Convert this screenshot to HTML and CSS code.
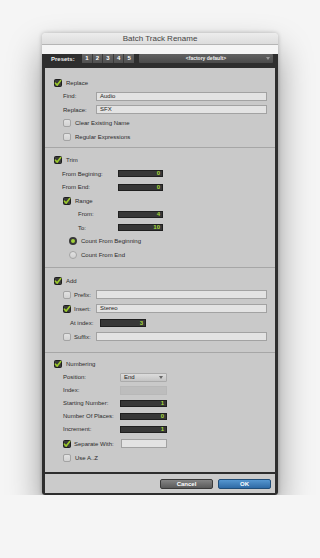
FILE: index.html
```html
<!DOCTYPE html>
<html>
<head>
<meta charset="utf-8">
<link rel="stylesheet" href="styles.css">
</head>
<body>
<div class="win">
  <div class="title">Batch Track Rename</div>
  <div class="frame">
    <div class="presets">
      <span class="plabel">Presets:</span>
      <div class="pbtns"><span>1</span><span>2</span><span>3</span><span>4</span><span>5</span></div>
      <div class="pdrop">&lt;factory default&gt;<i class="tri"></i></div>
    </div>
    <div class="panel">
      <section class="sec s-replace">
        <div class="row p9"><span class="cb on"><svg viewBox="0 0 8 8"><path d="M1.4 4.2 L3.2 6.1 L6.7 1.6"/></svg></span><span class="t">Replace</span></div>
        <div class="row p18"><span class="lbl w33">Find:</span><span class="inp w171">Audio</span></div>
        <div class="row p18"><span class="lbl w33">Replace:</span><span class="inp w171">SFX</span></div>
        <div class="row p18"><span class="cb"></span><span class="t">Clear Existing Name</span></div>
        <div class="row p18"><span class="cb"></span><span class="t">Regular Expressions</span></div>
      </section>
      <section class="sec s-trim">
        <div class="row p9"><span class="cb on"><svg viewBox="0 0 8 8"><path d="M1.4 4.2 L3.2 6.1 L6.7 1.6"/></svg></span><span class="t">Trim</span></div>
        <div class="row p17"><span class="lbl w56">From Begining:</span><span class="num w45">0</span></div>
        <div class="row p17"><span class="lbl w56">From End:</span><span class="num w45">0</span></div>
        <div class="row p18"><span class="cb on"><svg viewBox="0 0 8 8"><path d="M1.4 4.2 L3.2 6.1 L6.7 1.6"/></svg></span><span class="t">Range</span></div>
        <div class="row p33"><span class="lbl w40">From:</span><span class="num w45">4</span></div>
        <div class="row p33"><span class="lbl w40">To:</span><span class="num w45">10</span></div>
        <div class="row p24"><span class="rd on"></span><span class="t t4">Count From Beginning</span></div>
        <div class="row p24"><span class="rd"></span><span class="t t4">Count From End</span></div>
      </section>
      <section class="sec s-add">
        <div class="row p9 h13"><span class="cb on"><svg viewBox="0 0 8 8"><path d="M1.4 4.2 L3.2 6.1 L6.7 1.6"/></svg></span><span class="t">Add</span></div>
        <div class="row p18 h14"><span class="cb"></span><span class="lbl w22 t">Prefix:</span><span class="inp w171"></span></div>
        <div class="row p18 h14"><span class="cb on"><svg viewBox="0 0 8 8"><path d="M1.4 4.2 L3.2 6.1 L6.7 1.6"/></svg></span><span class="lbl w22 t">Insert:</span><span class="inp w171">Stereo</span></div>
        <div class="row p25 h14"><span class="lbl w30">At index:</span><span class="num w46 tall">3</span></div>
        <div class="row p18 h14"><span class="cb"></span><span class="lbl w22 t">Suffix:</span><span class="inp w171"></span></div>
      </section>
      <section class="sec s-num">
        <div class="row p9 h13"><span class="cb on"><svg viewBox="0 0 8 8"><path d="M1.4 4.2 L3.2 6.1 L6.7 1.6"/></svg></span><span class="t">Numbering</span></div>
        <div class="row p18 h13"><span class="lbl w57">Position:</span><span class="sel w47">End<i class="tri dk"></i></span></div>
        <div class="row p18 h13"><span class="lbl w57">Index:</span><span class="dis w47"></span></div>
        <div class="row p18 h13"><span class="lbl w57">Starting Number:</span><span class="num w47">1</span></div>
        <div class="row p18 h13"><span class="lbl w57">Number Of Places:</span><span class="num w47">0</span></div>
        <div class="row p18 h13"><span class="lbl w57">Increment:</span><span class="num w47">1</span></div>
        <div class="row p18 h16"><span class="cb on"><svg viewBox="0 0 8 8"><path d="M1.4 4.2 L3.2 6.1 L6.7 1.6"/></svg></span><span class="lbl w47 t">Separate With:</span><span class="inp w46"></span></div>
        <div class="row p18 h13"><span class="cb"></span><span class="t">Use A..Z</span></div>
      </section>
    </div>
    <div class="footer">
      <span class="btn cancel">Cancel</span>
      <span class="btn ok">OK</span>
    </div>
  </div>
</div>
</body>
</html>
```

FILE: styles.css
```css
html, body {
  margin: 0;
  background: #f5f5f5;
  font-family: "Liberation Sans", Arial, sans-serif;
}
.win {
  width: 236px;
  margin: 33px 0 0 42px;
  border-radius: 4px 4px 3px 3px;
  box-shadow: 0 18px 34px rgba(0,0,0,0.4), 0 0 4px rgba(0,0,0,0.25);
}
.title {
  height: 11px;
  border-bottom: 1px solid #b5b5b5;
  background: linear-gradient(#ededed, #dcdcdc);
  border-radius: 4px 4px 0 0;
  color: #444;
  font-size: 8px;
  line-height: 12px;
  text-align: center;
}
.frame {
  background: #2e2e2e;
  padding: 0 3px 2px;
  border-radius: 0 0 3px 3px;
}
.presets {
  display: flex;
  align-items: center;
  height: 9px;
  margin: 9px 0 5px;
  padding-left: 6px;
}
.plabel {
  width: 31px;
  color: #f0f0f0;
  font-weight: bold;
  font-size: 6px;
}
.pbtns {
  display: flex;
  height: 9px;
  background: #3a3a3a;
  gap: 1px;
}
.pbtns span {
  width: 9.6px;
  height: 9px;
  background: linear-gradient(#666, #505050);
  color: #fff;
  font-weight: bold;
  font-size: 6px;
  line-height: 9px;
  text-align: center;
}
.pdrop {
  position: relative;
  margin-left: 5px;
  width: 134px;
  height: 9px;
  background: linear-gradient(#626262, #4a4a4a);
  border-radius: 1px;
  color: #f2f2f2;
  font-size: 5px;
  font-weight: bold;
  line-height: 9px;
  text-align: center;
}
.tri {
  position: absolute;
  right: 3px;
  top: 3px;
  width: 0;
  height: 0;
  border-left: 2px solid transparent;
  border-right: 2px solid transparent;
  border-top: 3px solid #9a9a9a;
}
.tri.dk { border-top-color: #666; top: 2px; }
.panel {
  background: #c9c9c9;
}
.sec + .sec {
  border-top: 1px solid #a6a6a6;
}
.s-replace { padding: 8px 0 3.5px; }
.s-trim { padding: 5.25px 0 5.75px; }
.s-add { padding: 6.5px 0 8.5px; }
.s-num { padding: 4.5px 0 7.5px; }
.row {
  display: flex;
  align-items: center;
  height: 13.5px;
  font-size: 6px;
  color: #2b2b2b;
}
.h13 { height: 13px; }
.h14 { height: 14px; }
.h16 { height: 16px; }
.p9 { padding-left: 9px; }
.p17 { padding-left: 17px; }
.p18 { padding-left: 18px; }
.p24 { padding-left: 24px; }
.p25 { padding-left: 25px; }
.p33 { padding-left: 33px; }
.lbl { flex: none; }
.w22 { width: 22px; }
.w30 { width: 30px; }
.w33 { width: 33px; }
.w40 { width: 40px; }
.w45 { width: 45px; }
.w46 { width: 46px; }
.w47 { width: 47px; }
.w56 { width: 56px; }
.w57 { width: 57px; }
.w171 { width: 171px; }
.t { margin-left: 4px; }
.lbl.t { margin-left: 3px; }
.t4 { margin-left: 4px; }
.cb {
  flex: none;
  box-sizing: border-box;
  width: 8px;
  height: 8px;
  border: 1px solid #a3a3a3;
  border-radius: 2px;
  background: linear-gradient(#e2e2e2, #d2d2d2);
}
.cb.on {
  border: 1px solid #1e1e1e;
  background: #3a3a3a;
  border-radius: 1.5px;
  position: relative;
}
.cb svg {
  position: absolute;
  left: -1px;
  top: -1px;
  width: 8px;
  height: 8px;
}
.cb path {
  fill: none;
  stroke: #9dcc2c;
  stroke-width: 1.6;
  stroke-linecap: round;
  stroke-linejoin: round;
}
.rd {
  flex: none;
  box-sizing: border-box;
  width: 8px;
  height: 8px;
  border-radius: 50%;
  border: 1px solid #a5a5a5;
  background: linear-gradient(#e2e2e2, #d0d0d0);
}
.rd.on {
  border: 2px solid #383838;
  background: #a2d23a;
}
.inp {
  box-sizing: border-box;
  height: 9px;
  border: 1px solid #a2a2a2;
  background: #e3e3e3;
  padding-left: 3px;
  font-size: 6px;
  line-height: 7px;
  color: #222;
}
.num {
  box-sizing: border-box;
  height: 7px;
  border: 1px solid #1f1f1f;
  background: #373737;
  color: #a6d93a;
  font-weight: bold;
  font-size: 6px;
  line-height: 5px;
  text-align: right;
  padding-right: 2px;
}
.num.tall { height: 8px; line-height: 6px; }
.sel {
  position: relative;
  box-sizing: border-box;
  height: 9px;
  border: 1px solid #ababab;
  border-radius: 1px;
  background: linear-gradient(#dcdcdc, #c4c4c4);
  padding-left: 3px;
  font-size: 6px;
  line-height: 7px;
  color: #222;
}
.dis {
  box-sizing: border-box;
  height: 9px;
  border: 1px solid #b8b8b8;
  background: #bdbdbd;
}
.footer {
  display: flex;
  justify-content: flex-end;
  align-items: center;
  gap: 5px;
  height: 19px;
  margin-top: 2px;
  padding-right: 4px;
  background: #cbcbcb;
}
.btn {
  box-sizing: border-box;
  width: 53px;
  height: 10px;
  border-radius: 2px;
  color: #fff;
  font-weight: bold;
  font-size: 6px;
  line-height: 8px;
  text-align: center;
}
.cancel {
  border: 1px solid #3a3a3a;
  background: linear-gradient(#858585, #5a5a5a);
}
.ok {
  border: 1px solid #204d78;
  background: linear-gradient(#5596d0, #2f6aa5);
}
```
